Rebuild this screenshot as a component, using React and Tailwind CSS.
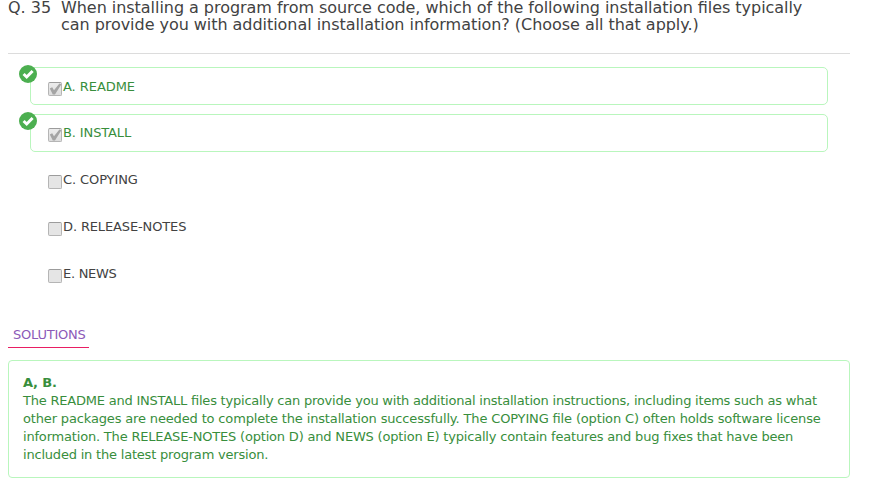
const options = [
  { label: 'A. README', correct: true, pad: 'pt-[10px]', spacing: 'tracking-[-0.06px]' },
  { label: 'B. INSTALL', correct: true, pad: 'pt-[9px]', spacing: 'tracking-[-0.12px]' },
  { label: 'C. COPYING', correct: false, pad: 'pt-[9px]', spacing: 'tracking-[-0.1px]' },
  { label: 'D. RELEASE-NOTES', correct: false, pad: 'pt-[9px]', spacing: 'tracking-[-0.13px]' },
  { label: 'E. NEWS', correct: false, pad: 'pt-[9px]', spacing: 'tracking-[-0.28px]' },
];

const explanation = [
  {
    text: 'The README and INSTALL files typically can provide you with additional installation instructions, including items such as what',
    spacing: 'tracking-[-0.213px]',
  },
  {
    text: 'other packages are needed to complete the installation successfully. The COPYING file (option C) often holds software license',
    spacing: 'tracking-[-0.152px]',
  },
  {
    text: 'information. The RELEASE-NOTES (option D) and NEWS (option E) typically contain features and bug fixes that have been',
    spacing: 'tracking-[-0.187px]',
  },
  { text: 'included in the latest program version.', spacing: 'tracking-[-0.2px]' },
];

function CorrectBadge() {
  return (
    <svg className="absolute -left-3 -top-[3px] h-[18px] w-[18px]" viewBox="0 0 18 18">
      <circle cx="9" cy="9" r="9" fill="#4caf50" />
      <path d="M4.6 9 7.7 12 13.6 6" fill="none" stroke="#fff" strokeWidth="3" />
    </svg>
  );
}

function Checkbox({ checked }) {
  return (
    <span
      className={
        'mt-[4px] block h-[14px] w-[14px] shrink-0 rounded-[2px] border border-[#b5b5b5] border-t-[#9c9c9c] ' +
        (checked ? 'bg-linear-to-b from-[#ececec] to-[#dddddd]' : 'bg-[#e5e5e5]')
      }
    >
      {checked && (
        <svg className="block h-3 w-3 overflow-visible" viewBox="0 0 12 12">
          <path d="M0.8 5.4 3.2 4.2 5 7.2 10.4 0.6 12.4 1.2 6 11.4 3.8 11.4Z" fill="#a4a4a4" />
        </svg>
      )}
    </span>
  );
}

function Option({ label, correct, pad, spacing }) {
  return (
    <li
      className={
        'relative flex h-[38px] items-start rounded-[5px] border pl-[17px] ' +
        pad +
        (correct ? ' border-[#b9f6bd] text-[#388e3c]' : ' border-transparent text-[#424242]')
      }
    >
      {correct && <CorrectBadge />}
      <Checkbox checked={correct} />
      <span className={'ml-px text-[13px] leading-[18px] ' + spacing}>{label}</span>
    </li>
  );
}

export default function App() {
  return (
    <main className="h-[486px] w-[883px] overflow-hidden bg-white pl-2 font-['DejaVu_Sans',sans-serif] text-[#424242] [font-feature-settings:'liga'_1]">
      <header className="flex h-[54px] w-[842px] border-b border-[#dcdcdc] text-[16px] leading-[17px]">
        <span className="-mt-px w-[53px] shrink-0">Q. 35</span>
        <h1 className="-mt-px whitespace-nowrap tracking-[-0.044px]">
          When installing a program from source code, which of the following installation files typically
          <br />
          can provide you with additional installation information? (Choose all that apply.)
        </h1>
      </header>
      <ul className="ml-[22px] mt-[13px] flex w-[798px] flex-col gap-[9px]">
        {options.map((o) => (
          <Option key={o.label} {...o} />
        ))}
      </ul>
      <div className="mt-[33px] h-[22px] w-[81px] border-b border-[#e91e63] pl-[5px] text-[13px] leading-[18px] tracking-[-0.23px] text-[#8c5ab8]">
        SOLUTIONS
      </div>
      <section className="mt-3 h-[118px] w-[842px] rounded-[4px] border border-[#b9f6bd] pl-[14px] pt-[13px] text-[13px] leading-[18px] text-[#388e3c]">
        <b className="block tracking-[-0.2px]">A, B.</b>
        <p className="whitespace-nowrap">
          {explanation.map((line) => (
            <span key={line.text} className={'block ' + line.spacing}>
              {line.text}
            </span>
          ))}
        </p>
      </section>
    </main>
  );
}
